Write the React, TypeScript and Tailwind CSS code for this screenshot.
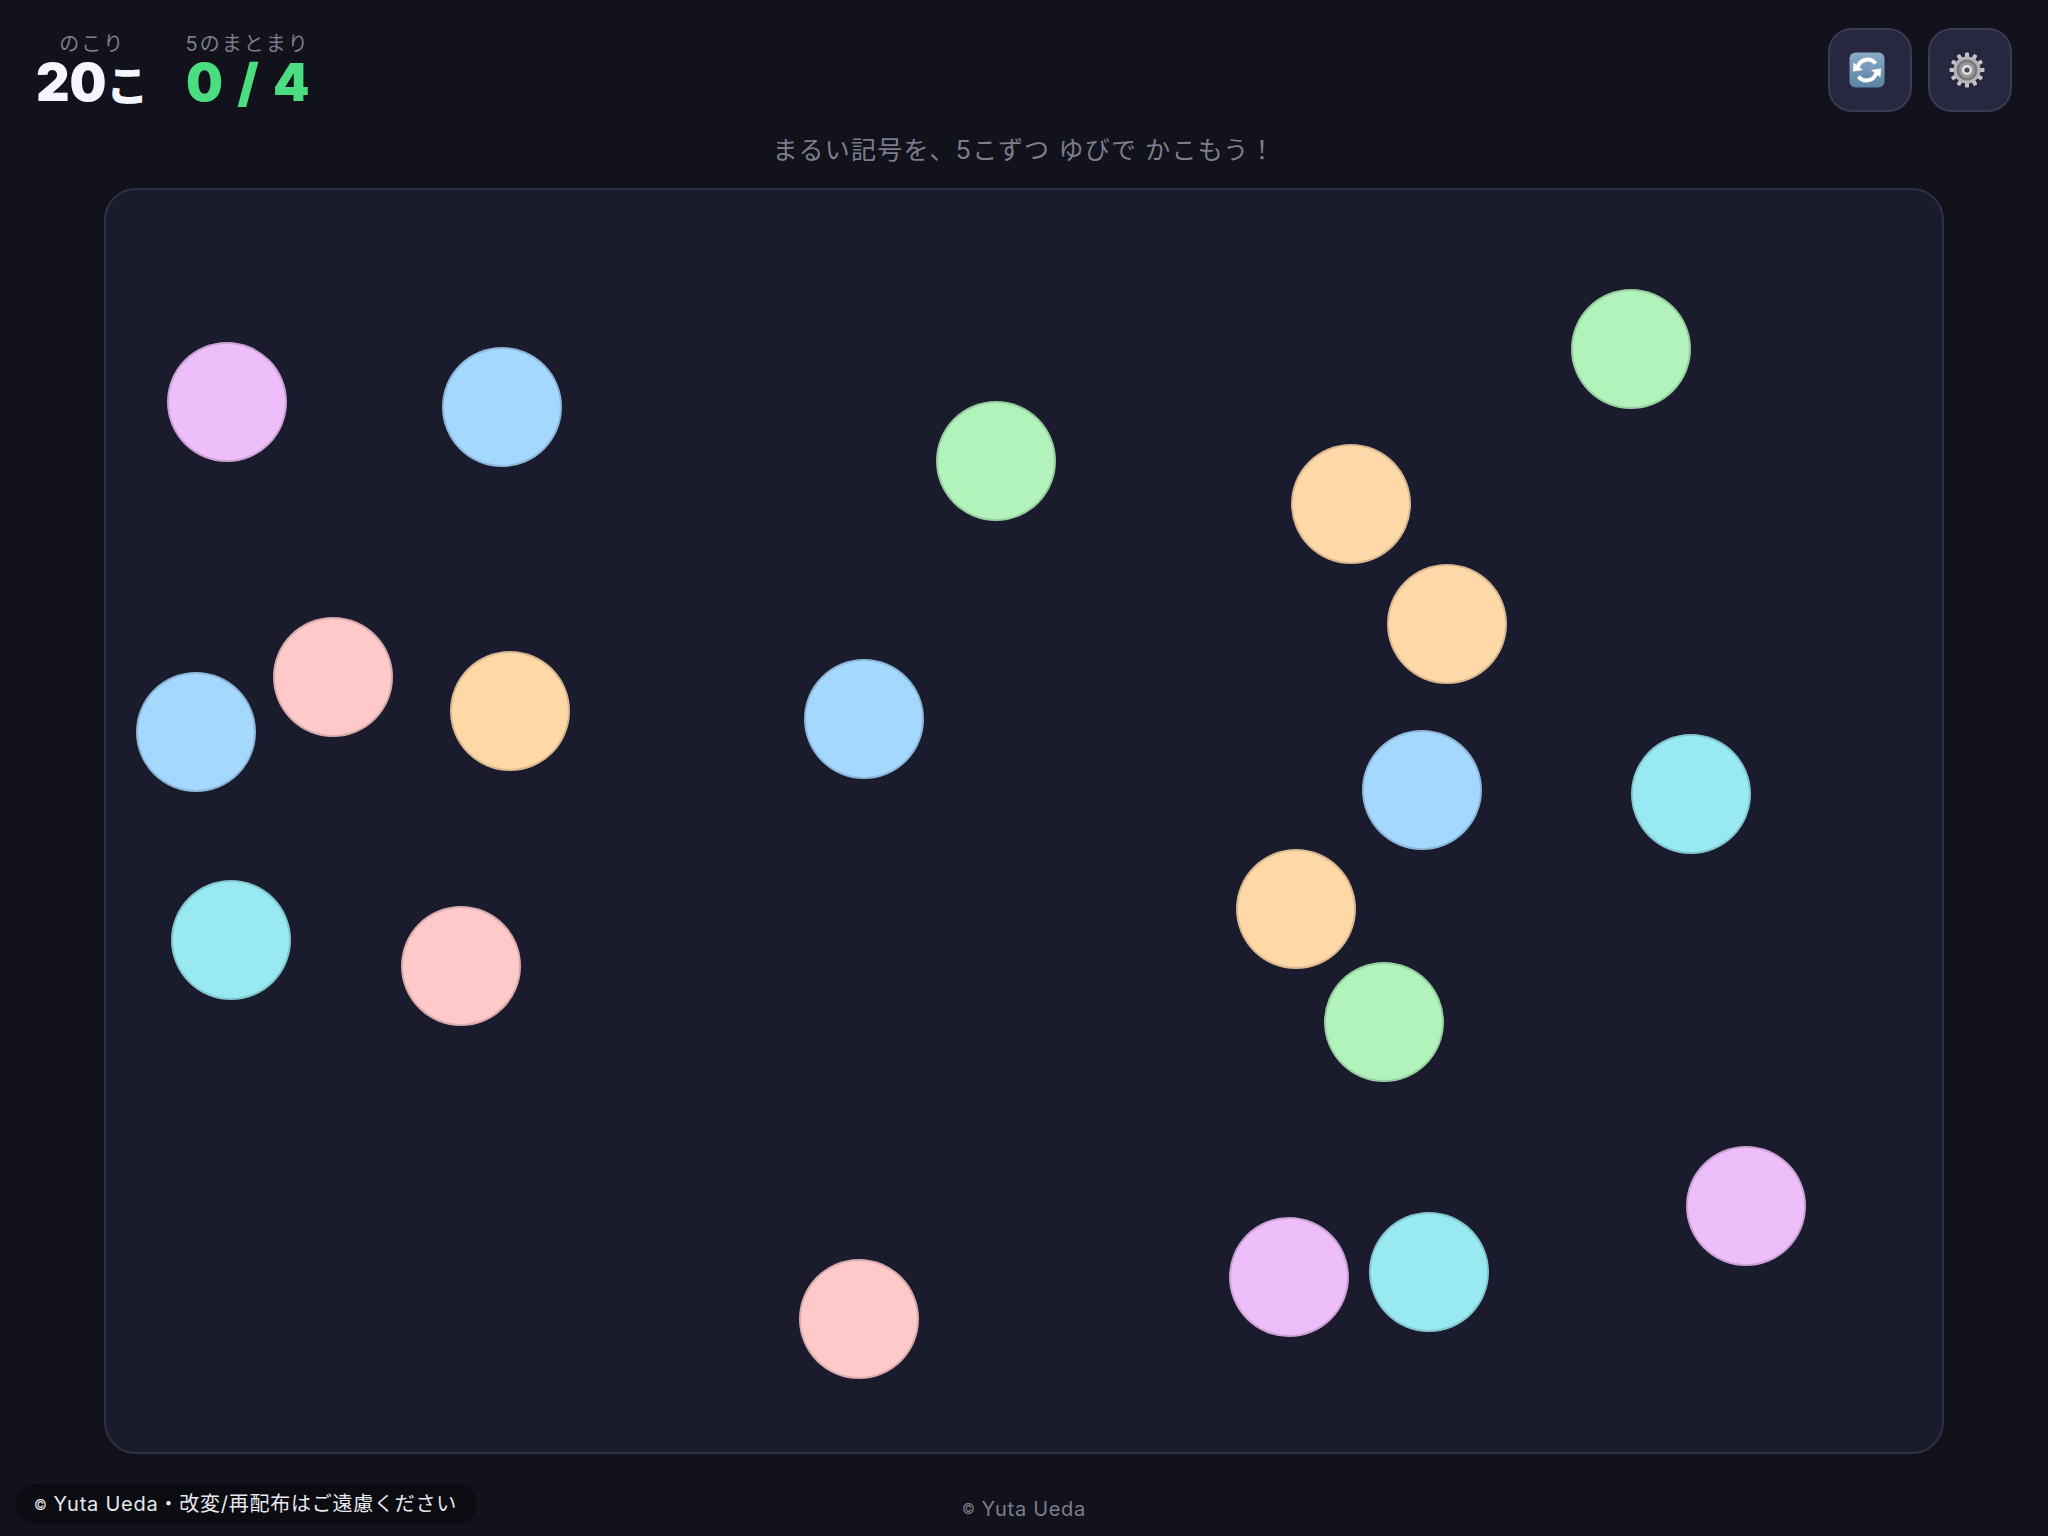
const font = '[font-family:Inter,"Noto_Sans_CJK_JP",sans-serif]';

const dots = [
  { x: 227, y: 402, color: 'bg-[#eebefa]' },
  { x: 502, y: 407, color: 'bg-[#a5d8ff]' },
  { x: 996, y: 461, color: 'bg-[#b2f2bb]' },
  { x: 1631, y: 349, color: 'bg-[#b2f2bb]' },
  { x: 1351, y: 504, color: 'bg-[#ffd8a8]' },
  { x: 1447, y: 624, color: 'bg-[#ffd8a8]' },
  { x: 333, y: 677, color: 'bg-[#ffc9c9]' },
  { x: 196, y: 732, color: 'bg-[#a5d8ff]' },
  { x: 510, y: 711, color: 'bg-[#ffd8a8]' },
  { x: 864, y: 719, color: 'bg-[#a5d8ff]' },
  { x: 1422, y: 790, color: 'bg-[#a5d8ff]' },
  { x: 1691, y: 794, color: 'bg-[#99e9f2]' },
  { x: 231, y: 940, color: 'bg-[#99e9f2]' },
  { x: 461, y: 966, color: 'bg-[#ffc9c9]' },
  { x: 1296, y: 909, color: 'bg-[#ffd8a8]' },
  { x: 1384, y: 1022, color: 'bg-[#b2f2bb]' },
  { x: 1746, y: 1206, color: 'bg-[#eebefa]' },
  { x: 1289, y: 1277, color: 'bg-[#eebefa]' },
  { x: 1429, y: 1272, color: 'bg-[#99e9f2]' },
  { x: 859, y: 1319, color: 'bg-[#ffc9c9]' },
];

function RefreshEmoji() {
  return (
    <svg width="36" height="36" viewBox="0 0 36 36">
      <defs>
        <linearGradient id="tile" x1="0" y1="0" x2="0" y2="1">
          <stop offset="0" stopColor="#8aabc8" />
          <stop offset="1" stopColor="#5b82a2" />
        </linearGradient>
      </defs>
      <rect x="0.5" y="0.5" width="35" height="35" rx="6" fill="url(#tile)" />
      <path d="M9 14.5 A10 10 0 0 1 26.5 11.5" fill="none" stroke="#fff" strokeWidth="4" />
      <path d="M4.5 10.5 L14 18 L4 19.5 Z" fill="#fff" />
      <path d="M27 21.5 A10 10 0 0 1 9.5 24.5" fill="none" stroke="#fff" strokeWidth="4" />
      <path d="M31.5 25.5 L22 18 L32 16.5 Z" fill="#fff" />
    </svg>
  );
}

function GearEmoji() {
  const teeth = Array.from({ length: 12 }, (_, i) => i * 30);
  return (
    <svg width="36" height="36" viewBox="0 0 36 36">
      {teeth.map(a => (
        <rect key={a} x="16" y="0.5" width="4" height="7" rx="1" fill="#c4c4c8" transform={`rotate(${a} 18 18)`} />
      ))}
      <circle cx="18" cy="18" r="13.5" fill="#b4b4b8" />
      <circle cx="18" cy="18" r="10.5" fill="#77777d" />
      <circle cx="18" cy="18" r="8" fill="#97979c" />
      <circle cx="18" cy="18" r="5" fill="#e6e6e8" />
      <circle cx="18" cy="18" r="2.6" fill="#4a4a54" />
    </svg>
  );
}

export default function App() {
  return (
    <div className={`relative flex h-screen flex-col bg-[#11121c] ${font}`}>
      {/* Header */}
      <div className="flex items-start justify-between pl-[36px] pr-[36px] pt-[28px]">
        <div className="flex gap-[37px]">
          <div className="flex flex-col items-center">
            <div className="mt-[3px] text-[20px] leading-[26px] tracking-[2px] text-[#7d7d8c]">のこり</div>
            <div className="text-[52px] leading-[52px] font-black text-[#f5f5ff]">
              20<span className="text-[42px]">こ</span>
            </div>
          </div>
          <div className="flex flex-col items-center">
            <div className="mt-[3px] text-[20px] leading-[26px] tracking-[2px] text-[#7d7d8c]">5のまとまり</div>
            <div className="text-[52px] leading-[52px] font-black [word-spacing:4px] text-[#4ade80]">0 / 4</div>
          </div>
        </div>
        <div className="flex gap-[16px]">
          <button className="flex h-[84px] w-[84px] items-center justify-center rounded-[24px] border-2 border-[#3a3a52] bg-[#27273f] pr-[6px]">
            <RefreshEmoji />
          </button>
          <button className="flex h-[84px] w-[84px] items-center justify-center rounded-[24px] border-2 border-[#3a3a52] bg-[#27273f] pr-[6px]">
            <GearEmoji />
          </button>
        </div>
      </div>

      <div className="mt-[20px] h-[36px] text-center text-[25px] leading-[36px] tracking-[1.2px] text-[#7d7d8c]">
        まるい記号を、5こずつ ゆびで かこもう！
      </div>

      {/* Board */}
      <div className="relative mx-[104px] mt-[20px] flex-1 rounded-[32px] border-2 border-[#2f3045] bg-[#1a1c2e]">
        {dots.map((d, i) => (
          <div
            key={i}
            className={`absolute h-[120px] w-[120px] rounded-full border-2 border-black/15 ${d.color}`}
            style={{ left: d.x - 166, top: d.y - 250 }}
          />
        ))}
      </div>

      <div className="flex h-[82px] items-center justify-center pt-[27px] text-[20px] tracking-[0.7px] text-[#7d7d8c]">
        <span className="mr-[6px] text-[14px]">©</span>Yuta Ueda
      </div>

      <div className="absolute bottom-[12px] left-[16px] flex h-[40px] items-center rounded-full bg-[#0b0b12] pl-[18px] pr-[20px] text-[20px] tracking-[0.75px] text-[#e8e8ee]">
        <span className="mr-[6px] text-[14px]">©</span>Yuta Ueda・改変/再配布はご遠慮ください
      </div>
    </div>
  );
}
